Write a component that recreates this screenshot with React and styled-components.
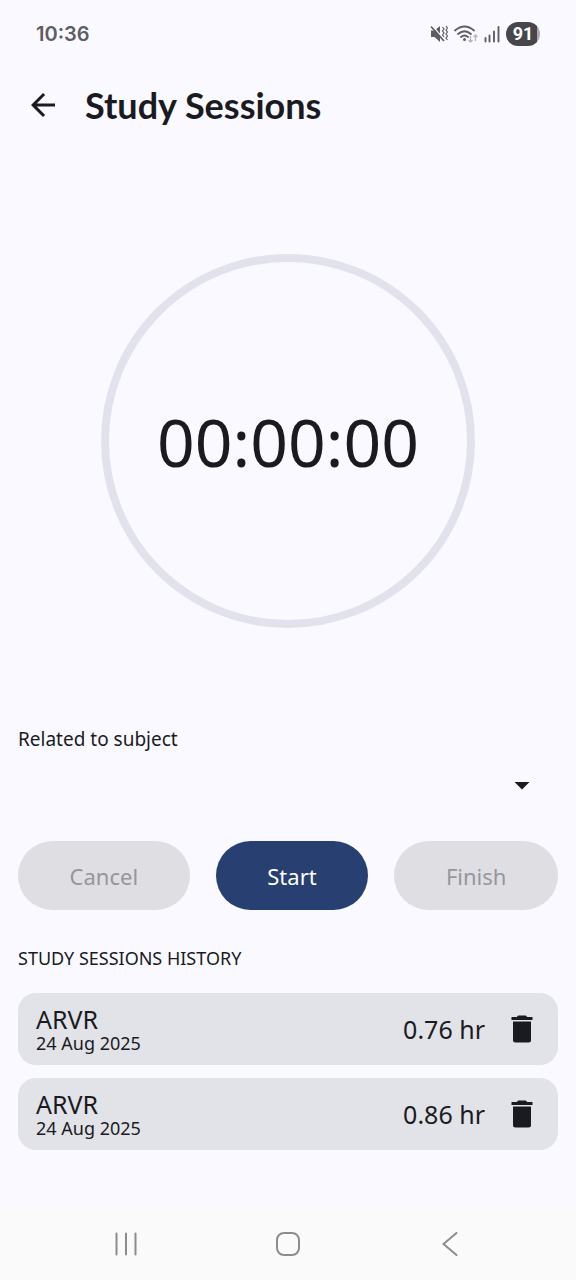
import React from "react";
import styled, { createGlobalStyle } from "styled-components";

const ink = "#1a1b21";

const GlobalStyle = createGlobalStyle`
  *, *::before, *::after { box-sizing: border-box; }
  body {
    margin: 0;
    background: #f9f9ff;
    color: ${ink};
    font-family: "Noto Sans", "Open Sans", sans-serif;
  }
  button, select { font: inherit; color: inherit; }
  h1, h2, h3, p, ul { margin: 0; padding: 0; }
`;

const Screen = styled.div`
  display: flex;
  flex-direction: column;
  min-height: 100vh;
`;

const StatusBar = styled.header`
  display: flex;
  align-items: center;
  justify-content: space-between;
  height: 67px;
  padding: 0 36px;
  color: #5d5d64;
  font-family: Inter, Roboto, sans-serif;
  font-size: 20px;
  font-weight: 600;
`;

const StatusIcons = styled.div`
  display: flex;
  align-items: center;
  gap: 6px;
  svg { display: block; }
`;

const Battery = styled.span`
  display: flex;
  align-items: center;
  justify-content: center;
  width: 34px;
  height: 24px;
  border-radius: 12px;
  background: linear-gradient(90deg, #47474b 91%, #aaaab0 91%);
  color: #fff;
  font-family: Roboto, sans-serif;
  font-size: 18px;
  font-weight: 700;
`;

const AppBar = styled.div`
  display: flex;
  align-items: center;
  gap: 24px;
  height: 76px;
  padding: 0 25px;
`;

const IconButton = styled.button`
  display: flex;
  padding: 0;
  border: 0;
  background: none;
  color: ${ink};
  cursor: pointer;
`;

const Title = styled.h1`
  font-family: Lato, "Noto Sans", sans-serif;
  font-size: 36px;
  line-height: 44px;
  font-weight: 700;
`;

const TimerSection = styled.section`
  display: flex;
  justify-content: center;
  padding: 111px 0 97px;
`;

const Dial = styled.div`
  display: flex;
  align-items: center;
  justify-content: center;
  width: 65%;
  aspect-ratio: 1;
  border: 8px solid #e2e2ec;
  border-radius: 50%;
`;

const Time = styled.time`
  font-size: 66px;
  line-height: 80px;
`;

const Content = styled.main`
  display: flex;
  flex-direction: column;
  padding: 0 18px;
`;

const SubjectLabel = styled.label`
  font-size: 19px;
  line-height: 28px;
`;

const SelectBox = styled.div`
  position: relative;
  height: 64px;
  svg {
    position: absolute;
    right: 18px;
    top: 14px;
    pointer-events: none;
  }
`;

const Select = styled.select`
  width: 100%;
  height: 100%;
  border: 0;
  appearance: none;
  background: transparent;
  font-size: 18px;
`;

const Actions = styled.div`
  display: flex;
  gap: 26px;
  margin-top: 24px;
`;

const ActionButton = styled.button`
  flex: 1 1 auto;
  height: 69px;
  border: 0;
  border-radius: 35px;
  background: ${(p) => (p.$primary ? "#284071" : "#dedee3")};
  color: ${(p) => (p.$primary ? "#fff" : "#96969b")};
  font-size: 22px;
`;

const SectionTitle = styled.h2`
  margin-top: 34px;
  font-size: 18px;
  line-height: 28px;
  font-weight: 400;
`;

const History = styled.ul`
  display: flex;
  flex-direction: column;
  gap: 13px;
  margin-top: 21px;
  margin-bottom: 24px;
  list-style: none;
`;

const SessionCard = styled.li`
  display: flex;
  align-items: center;
  gap: 19px;
  height: 72px;
  padding: 0 18px;
  border-radius: 18px;
  background: #e2e3e8;
`;

const SessionInfo = styled.div`
  flex: 1;
  padding-top: 2px;
`;

const Subject = styled.h3`
  font-size: 25px;
  line-height: 26px;
  font-weight: 400;
`;

const SessionDate = styled.p`
  font-size: 18px;
  line-height: 22px;
`;

const Duration = styled.span`
  font-size: 25px;
`;

const NavBar = styled.nav`
  display: flex;
  align-items: center;
  justify-content: space-around;
  height: 73px;
  margin-top: auto;
  padding: 0 45px;
  background: #fafafa;
`;

const NavButton = styled(IconButton)`
  color: #8c8c8c;
`;

const MuteIcon = () => (
  <svg width="18" height="18" viewBox="0 0 18 18" aria-hidden="true">
    <path d="M1 5.500h3.500l5.500-4.500v16l-5.500-5H1z" fill="currentColor" />
    <path d="M2.500 1l12 14" stroke="#f9f9ff" strokeWidth="1.500" />
    <path d="M1 1.500l13 14.500" stroke="currentColor" strokeWidth="1.700" />
    <path d="M12.500 2l1.500 2-1.500 2 1.500 2-1.500 2 1.500 2M16 1l1.500 2-1.500 2 1.500 2-1.500 2 1.500 2-1.500 2 1.500 2" fill="none" stroke="currentColor" strokeWidth="1.200" />
  </svg>
);

const WifiIcon = () => (
  <svg width="24" height="20" viewBox="0 0 24 20" aria-hidden="true">
    <g fill="none" stroke="currentColor" strokeWidth="1.800" strokeLinecap="round">
      <path d="M1 6.500Q10.500-1.500 20 6.500M4 10Q10.500 4.500 17 10M7 13Q10.500 10 14 13" />
    </g>
    <circle cx="10.500" cy="15.500" r="1.500" fill="currentColor" />
    <path d="M16.500 12v6m-2-2 2 2 2-2M21.500 17v-6m-2 2 2-2 2 2" fill="none" stroke="#b5b5bc" strokeWidth="1.300" />
  </svg>
);

const SignalIcon = () => (
  <svg width="16" height="18" viewBox="0 0 16 18" aria-hidden="true">
    <path d="M1.500 13v3.500M5.500 10.500v6M10 6.500v10M14.500 2v14.500" stroke="currentColor" strokeWidth="1.900" strokeLinecap="round" />
  </svg>
);

const BackIcon = () => (
  <svg width="36" height="36" viewBox="0 0 24 24" fill="currentColor" aria-hidden="true">
    <path d="M20 11H7.830l5.590-5.590L12 4l-8 8 8 8 1.410-1.410L7.830 13H20z" />
  </svg>
);

const ArrowDownIcon = () => (
  <svg width="36" height="36" viewBox="0 0 24 24" fill="currentColor" aria-hidden="true">
    <path d="M7 10l5 5 5-5z" />
  </svg>
);

const TrashIcon = () => (
  <svg width="36" height="36" viewBox="0 0 24 24" fill="currentColor" aria-hidden="true">
    <path d="M6 7h12v12.500Q18 21 16.500 21h-9Q6 21 6 19.500z" />
    <path d="M5 4H8.500L9.500 3h5l1 1H19v2H5z" />
  </svg>
);

const sessions = [
  { id: 1, subject: "ARVR", date: "24 Aug 2025", hours: "0.76 hr" },
  { id: 2, subject: "ARVR", date: "24 Aug 2025", hours: "0.86 hr" },
];

export default function App() {
  return (
    <>
      <GlobalStyle />
      <Screen>
        <StatusBar>
          <span>10:36</span>
          <StatusIcons>
            <MuteIcon />
            <WifiIcon />
            <SignalIcon />
            <Battery>91</Battery>
          </StatusIcons>
        </StatusBar>
        <AppBar>
          <IconButton type="button" aria-label="Back">
            <BackIcon />
          </IconButton>
          <Title>Study Sessions</Title>
        </AppBar>
        <TimerSection>
          <Dial>
            <Time>00:00:00</Time>
          </Dial>
        </TimerSection>
        <Content>
          <SubjectLabel htmlFor="subject">Related to subject</SubjectLabel>
          <SelectBox>
            <Select id="subject" defaultValue="">
              <option value=""></option>
              <option value="ARVR">ARVR</option>
            </Select>
            <ArrowDownIcon />
          </SelectBox>
          <Actions>
            <ActionButton type="button" disabled>Cancel</ActionButton>
            <ActionButton type="button" $primary>Start</ActionButton>
            <ActionButton type="button" disabled>Finish</ActionButton>
          </Actions>
          <SectionTitle>STUDY SESSIONS HISTORY</SectionTitle>
          <History>
            {sessions.map((s) => (
              <SessionCard key={s.id}>
                <SessionInfo>
                  <Subject>{s.subject}</Subject>
                  <SessionDate>{s.date}</SessionDate>
                </SessionInfo>
                <Duration>{s.hours}</Duration>
                <IconButton type="button" aria-label="Delete session">
                  <TrashIcon />
                </IconButton>
              </SessionCard>
            ))}
          </History>
        </Content>
        <NavBar>
          <NavButton type="button" aria-label="Recent apps">
            <svg width="26" height="26" viewBox="0 0 26 26" aria-hidden="true">
              <path d="M3.500 2.500v21M13 2.500v21M22.500 2.500v21" stroke="currentColor" strokeWidth="2" strokeLinecap="round" />
            </svg>
          </NavButton>
          <NavButton type="button" aria-label="Home">
            <svg width="26" height="26" viewBox="0 0 26 26" aria-hidden="true">
              <rect x="2" y="2" width="22" height="22" rx="7" fill="none" stroke="currentColor" strokeWidth="2" />
            </svg>
          </NavButton>
          <NavButton type="button" aria-label="Go back">
            <svg width="26" height="26" viewBox="0 0 26 26" aria-hidden="true">
              <path d="M19.500 2 6.500 13l13 11" fill="none" stroke="currentColor" strokeWidth="2" strokeLinecap="round" />
            </svg>
          </NavButton>
        </NavBar>
      </Screen>
    </>
  );
}
